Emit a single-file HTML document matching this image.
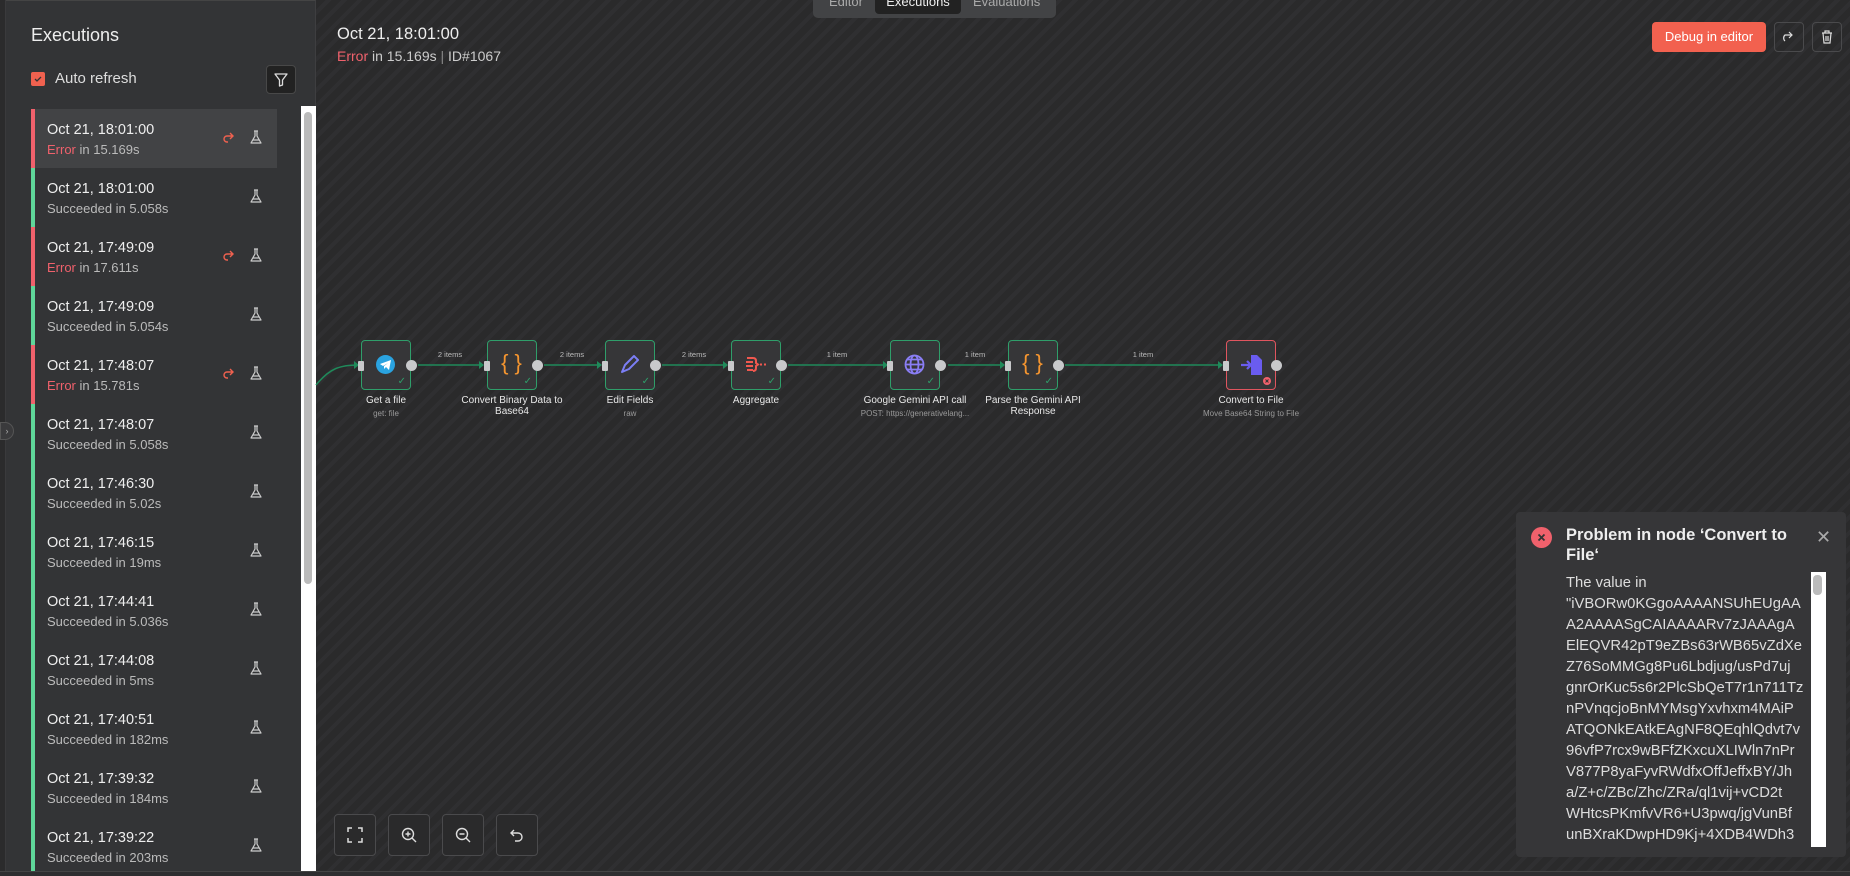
<!DOCTYPE html>
<html><head><meta charset="utf-8"><style>
*{box-sizing:border-box;margin:0;padding:0}
body{width:1850px;height:876px;overflow:hidden;background:#2a2a2b;font-family:"Liberation Sans",sans-serif;position:relative;color:#e8e8e8}
.canvas{position:absolute;left:316px;top:0;width:1534px;height:871px;background:repeating-linear-gradient(135deg,#2a2a2b 0 7px,#2f2f31 7px 11px)}
.side{position:absolute;left:0;top:0;width:316px;height:871px;background:#333436;border-right:1px solid #3e3e40;border-top:1px solid #444}
.strip{position:absolute;left:0;top:0;width:6px;height:876px;background:#2b2b2c;border-right:1px solid #3a3a3c}
.abs{position:absolute}
.item{position:absolute;left:31px;width:246px;height:59px;border-left:4px solid #5fd69a}
.item.err{border-left-color:#f0616c}
.item.sel{background:#424345}
.item .t{position:absolute;left:12px;top:13px;font-size:14.5px;color:#eee}
.item .s{position:absolute;left:12px;top:33px;font-size:13px;color:#bbb}
.item .s b{font-weight:normal;color:#f0616c}
.fl{position:absolute;left:214px;top:20px}
.rt{position:absolute;left:186px;top:20px}
.node{position:absolute;top:340px;width:50px;height:50px;background:#363638;border:1.5px solid #2f9e6a;border-radius:4px}
.node.bad{border-color:#e0555f}
.node .ck{position:absolute;right:4px;bottom:2px;color:#2f9e6a;font-size:10px}
.pin{position:absolute;top:20px;left:-4px;width:6px;height:10px;background:#c8c9cb;border-radius:1px}
.pout{position:absolute;top:19px;right:-7px;width:11px;height:11px;background:#c8c9cb;border-radius:50%}
.lbl{position:absolute;top:395px;width:124px;text-align:center;font-size:10px;color:#e8e8e8;line-height:11px}
.sub{font-size:8px;color:#999;margin-top:2px;white-space:nowrap}
.el{position:absolute;top:350px;font-size:7.5px;color:#bbb;width:60px;text-align:center}
.zb{position:absolute;top:814px;width:42px;height:42px;border:1px solid #4a4a4c;border-radius:4px;background:#2a2a2b;display:flex;align-items:center;justify-content:center}
</style></head><body>
<div class="canvas"></div>
<div class="side"></div>
<div class="strip"></div>
<div class="abs" style="left:0;top:422px;width:14px;height:18px;background:#3a3a3c;border:1px solid #555;border-radius:0 9px 9px 0;font-size:9px;color:#aaa;line-height:16px;text-align:center">›</div>
<div class="abs" style="left:31px;top:25px;font-size:18px;color:#eee">Executions</div>
<div class="abs" style="left:31px;top:72px;width:14px;height:14px;background:#f0614f;border-radius:2px"><svg width="14" height="14"><path d="M4 7l2 2 4-4" stroke="#333" stroke-width="1.3" fill="none"/></svg></div>
<div class="abs" style="left:55px;top:70px;font-size:15px;color:#ddd">Auto refresh</div>
<div class="abs" style="left:266px;top:65px;width:30px;height:29px;background:#222;border:1px solid #484848;border-radius:4px"><svg width="28" height="27"><path d="M8 8h12l-4.5 6v5l-3 1v-6z" stroke="#ddd" stroke-width="1.3" fill="none" stroke-linejoin="round"/></svg></div>

<div class="abs" style="left:301px;top:106px;width:15px;height:765px;background:#fff"></div>
<div class="abs" style="left:304px;top:112px;width:8px;height:472px;background:#bbb;border-radius:4px"></div>

<div id="list"></div>

<div class="abs" style="left:337px;top:25px;font-size:16.5px;color:#eee">Oct 21, 18:01:00</div>
<div class="abs" style="left:337px;top:48px;font-size:14px;color:#ccc"><span style="color:#f0616c">Error</span> in 15.169s <span style="color:#888">|</span> ID#1067</div>

<div class="abs" style="left:813px;top:-2px;width:243px;height:20px;background:#424345;border-radius:0 0 5px 5px;font-size:13px;color:#aaa">
<span class="abs" style="left:16px;top:-4px">Editor</span>
<span class="abs" style="left:62px;top:0;width:86px;height:16px;background:#222;border-radius:0 0 4px 4px;color:#eee;text-align:center;line-height:8px">Executions</span>
<span class="abs" style="left:160px;top:-4px">Evaluations</span></div>

<div class="abs" style="left:1652px;top:22px;width:114px;height:30px;background:#f2614f;border-radius:4px;color:#fff;font-size:13px;text-align:center;line-height:30px">Debug in editor</div>
<div class="abs" style="left:1774px;top:22px;width:30px;height:30px;border:1px solid #4a4a4c;border-radius:4px"><svg width="28" height="28"><path d="M10 18a4 4 0 0 1 0-6h7m-3-3l3 3-3 3" stroke="#ddd" stroke-width="1.2" fill="none"/></svg></div>
<div class="abs" style="left:1812px;top:22px;width:30px;height:30px;border:1px solid #4a4a4c;border-radius:4px"><svg width="28" height="28"><path d="M9 10h10M12 10V8h4v2M10 10l1 10h6l1-10M13 13v5M15 13v5" stroke="#ddd" stroke-width="1.2" fill="none"/></svg></div>

<svg class="abs" style="left:0;top:0" width="1850" height="876">
<path d="M316 385 C330 368 340 365 359 365" stroke="#1f8a5a" stroke-width="1.5" fill="none"/>
<g stroke="#1f8a5a" stroke-width="1.5">
<line x1="418" y1="365" x2="483" y2="365"/><line x1="544" y1="365" x2="601" y2="365"/><line x1="662" y1="365" x2="727" y2="365"/><line x1="788" y1="365" x2="887" y2="365"/><line x1="948" y1="365" x2="1004" y2="365"/><line x1="1065" y1="365" x2="1222" y2="365"/></g>
<g fill="#1f8a5a"><path d="M354 361l5 4-5 4z"/><path d="M479 361l5 4-5 4z"/><path d="M597 361l5 4-5 4z"/><path d="M723 361l5 4-5 4z"/><path d="M883 361l5 4-5 4z"/><path d="M1000 361l5 4-5 4z"/><path d="M1218 361l5 4-5 4z"/></g>
</svg>
<div class="el" style="left:420px">2 items</div><div class="el" style="left:542px">2 items</div><div class="el" style="left:664px">2 items</div><div class="el" style="left:807px">1 item</div><div class="el" style="left:945px">1 item</div><div class="el" style="left:1113px">1 item</div>

<div class="node" style="left:361px"><div class="pin"></div><div class="pout"></div><div class="ck">✓</div>
<svg width="47" height="47"><circle cx="23.5" cy="23.5" r="9.5" fill="#2aa3e0"/><path d="M18 23l11-4-2 10-3-3-2 2v-3l4-3-5 3z" fill="#fff"/></svg></div>
<div class="node" style="left:487px"><div class="pin"></div><div class="pout"></div><div class="ck">✓</div><div class="abs" style="left:0;width:47px;top:9px;text-align:center;color:#f5952f;font-size:22px">{ }</div></div>
<div class="node" style="left:605px"><div class="pin"></div><div class="pout"></div><div class="ck">✓</div>
<svg width="47" height="47"><path d="M16 31l3-7 9-9 4 4-9 9z" stroke="#7b7ef5" stroke-width="2" fill="none" stroke-linejoin="round"/></svg></div>
<div class="node" style="left:731px"><div class="pin"></div><div class="pout"></div><div class="ck">✓</div>
<svg width="47" height="47"><path d="M15 17h6M14 21h7M14 25h7M15 29h6M21 17q3 0 3 3v2l2 1.5-2 1.5v2q0 3-3 3M28 23.5h2M32 23.5h2" stroke="#f0584f" stroke-width="2" fill="none"/></svg></div>
<div class="node" style="left:890px"><div class="pin"></div><div class="pout"></div><div class="ck">✓</div>
<svg width="47" height="47"><g stroke="#8a7ef5" stroke-width="1.8" fill="none"><circle cx="23.5" cy="23.5" r="9"/><ellipse cx="23.5" cy="23.5" rx="4" ry="9"/><path d="M14.5 23.5h18M16 18.5h15M16 28.5h15"/></g></svg></div>
<div class="node" style="left:1008px"><div class="pin"></div><div class="pout"></div><div class="ck">✓</div><div class="abs" style="left:0;width:47px;top:9px;text-align:center;color:#f5952f;font-size:22px">{ }</div></div>
<div class="node bad" style="left:1226px"><div class="pin"></div><div class="pout"></div>
<svg width="47" height="47"><path d="M24 14h6l5 5v15H24z" fill="#6a5cf0"/><path d="M14 24h10M20 20l4 4-4 4" stroke="#6a5cf0" stroke-width="2.2" fill="none"/><circle cx="40" cy="40" r="4" fill="#f0616c"/><path d="M38.5 38.5l3 3M41.5 38.5l-3 3" stroke="#333" stroke-width="1"/></svg></div>

<div class="lbl" style="left:324px">Get a file<div class="sub">get: file</div></div>
<div class="lbl" style="left:450px">Convert Binary Data to Base64</div>
<div class="lbl" style="left:568px">Edit Fields<div class="sub">raw</div></div>
<div class="lbl" style="left:694px">Aggregate</div>
<div class="lbl" style="left:853px">Google Gemini API call<div class="sub">POST: https://generativelang...</div></div>
<div class="lbl" style="left:971px">Parse the Gemini API Response</div>
<div class="lbl" style="left:1189px">Convert to File<div class="sub">Move Base64 String to File</div></div>

<div class="zb" style="left:334px"><svg width="18" height="18"><path d="M2 6V2h4M12 2h4v4M16 12v4h-4M6 16H2v-4" stroke="#ddd" stroke-width="1.5" fill="none"/></svg></div>
<div class="zb" style="left:388px"><svg width="18" height="18"><circle cx="8" cy="8" r="5.5" stroke="#ddd" stroke-width="1.4" fill="none"/><path d="M12 12l4 4M5.5 8h5M8 5.5v5" stroke="#ddd" stroke-width="1.4"/></svg></div>
<div class="zb" style="left:442px"><svg width="18" height="18"><circle cx="8" cy="8" r="5.5" stroke="#ddd" stroke-width="1.4" fill="none"/><path d="M12 12l4 4M5.5 8h5" stroke="#ddd" stroke-width="1.4"/></svg></div>
<div class="zb" style="left:496px"><svg width="18" height="18"><path d="M6 4L3 7l3 3M3 7h7a4 4 0 0 1 0 8H7" stroke="#ddd" stroke-width="1.4" fill="none"/></svg></div>

<div class="abs" style="left:1516px;top:512px;width:330px;height:345px;background:#363638;border-radius:4px;overflow:hidden">
<div class="abs" style="left:15px;top:15px;width:21px;height:21px;border-radius:50%;background:#f0616c"><svg width="21" height="21"><path d="M7.5 7.5l6 6M13.5 7.5l-6 6" stroke="#333" stroke-width="1.8"/></svg></div>
<div class="abs" style="left:50px;top:13px;width:250px;font-size:16.5px;font-weight:bold;line-height:20px;color:#eee">Problem in node ‘Convert to File‘</div>
<div class="abs" style="left:300px;top:15px;font-size:18px;color:#aaa">✕</div>
<div class="abs" style="left:295px;top:60px;width:15px;height:275px;background:#fff"></div>
<div class="abs" style="left:297px;top:63px;width:9px;height:20px;background:#bbb;border-radius:4px"></div>
<div class="abs" style="left:50px;top:61px;width:245px;height:275px;font-size:14.8px;line-height:21px;color:#ddd;white-space:pre;overflow:hidden">The value in
"iVBORw0KGgoAAAANSUhEUgAA
A2AAAASgCAIAAAARv7zJAAAgA
ElEQVR42pT9eZBs63rWB65vZdXe
Z76SoMMGg8Pu6Lbdjug/usPd7uj
gnrOrKuc5s6r2PlcSbQeT7r1n711Tz
nPVnqcjoBnMYMsgYxvhxm4MAiP
ATQONkEAtkEAgNF8QEqhlQdvt7v
96vfP7rcx9wBFfZKxcuXLIWln7nPr
V877P8yaFyvRWdfxOffJeffxBY/Jh
a/Z+c/ZBc/Zhc/ZRa/ql1vij+vCD2t
WHtcsPKmfvVR6+U3pwq/jgVunBf
unBXraKDwpHD9Kj+4XDB4WDh3</div>
</div>
<div class="abs" style="left:0;top:871px;width:1850px;height:5px;background:#2e2e30;border-top:1px solid #444"></div>

<script>
var d=[["18:01:00",1,"15.169s"],["18:01:00",0,"5.058s"],["17:49:09",1,"17.611s"],["17:49:09",0,"5.054s"],["17:48:07",1,"15.781s"],["17:48:07",0,"5.058s"],["17:46:30",0,"5.02s"],["17:46:15",0,"19ms"],["17:44:41",0,"5.036s"],["17:44:08",0,"5ms"],["17:40:51",0,"182ms"],["17:39:32",0,"184ms"],["17:39:22",0,"203ms"]];
var fl='<svg width="14" height="16"><path d="M5 2h4M6 2v5l-4 7h10L8 7V2M4 11h6" stroke="#ccc" stroke-width="1.2" fill="none" stroke-linejoin="round"/></svg>';
var rt='<svg width="14" height="16"><path d="M9 4l3 3-3 3M12 7H6a3 3 0 0 0 0 6h1" stroke="#f0614f" stroke-width="1.4" fill="none"/></svg>';
var h='';d.forEach(function(r,i){h+='<div class="item'+(r[1]?' err':'')+(i==0?' sel':'')+'" style="top:'+(109+i*59)+'px"><div class="t">Oct 21, '+r[0]+'</div><div class="s">'+(r[1]?'<b>Error</b> in ':'Succeeded in ')+r[2]+'</div>'+(r[1]?'<div class="rt">'+rt+'</div>':'')+'<div class="fl">'+fl+'</div></div>';});
document.getElementById('list').innerHTML=h;
</script>
</body></html>
